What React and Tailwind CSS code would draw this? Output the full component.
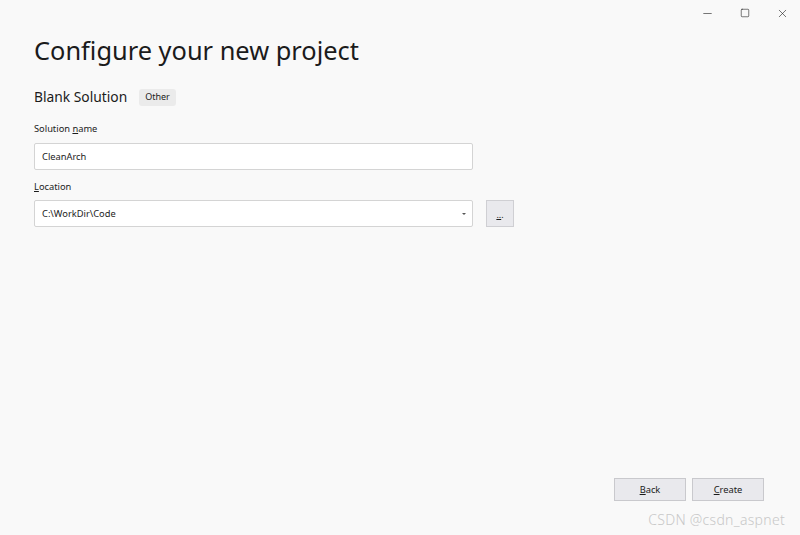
import { Minus, Square, X } from "lucide-react";

const App = () => {
    return (
        <div className="w-[800px] h-[535px] bg-[#f9f9f9] flex flex-col text-[#1b1b1b] font-['Noto_Sans','Open_Sans',sans-serif] overflow-hidden">
            {/* title bar */}
            <div className="flex justify-end h-[26px]">
                <div className="w-[38px] flex items-center justify-center"><Minus size={13} strokeWidth={1.1} /></div>
                <div className="w-[38px] flex items-center justify-center"><Square size={10} strokeWidth={1.4} /></div>
                <div className="w-[36px] flex items-center justify-center"><X size={13} strokeWidth={1.1} /></div>
            </div>

            <div className="flex flex-col flex-1 pl-[34px] pr-[36px]">
                <h1 className="text-[25.4px] leading-[34px] mt-[7px]">Configure your new project</h1>

                <div className="flex items-center gap-[12px] mt-[20px]">
                    <span className="text-[13.8px] leading-[20px]">Blank Solution</span>
                    <span className="bg-[#ebebeb] rounded-[3px] text-[9px] px-[6px] h-[17px] flex items-center">Other</span>
                </div>

                <label className="text-[9.3px] mt-[14px] leading-[16px]">Solution <span className="underline">n</span>ame</label>
                <div className="w-[439px] h-[27px] mt-[6px] bg-white border border-[#d4d4d4] rounded-[2px] flex items-center px-[7px] text-[9.3px]">CleanArch</div>

                <label className="text-[9.3px] mt-[9px] leading-[16px]"><span className="underline">L</span>ocation</label>
                <div className="flex items-center gap-[13px] mt-[5px]">
                    <div className="w-[439px] h-[27px] bg-white border border-[#d4d4d4] rounded-[2px] flex items-center justify-between pl-[7px] pr-[4px] text-[9.3px]">
                        <span>C:\WorkDir\Code</span>
                        <svg width="8" height="6" viewBox="0 0 8 6"><path d="M2 2h4L4 4z" fill="#555" /></svg>
                    </div>
                    <div className="w-[28px] h-[27px] bg-[#e9e9ed] border border-[#cfcfd3] flex items-center justify-center text-[9px] pt-[2px]"><span className="underline">..</span>.</div>
                </div>

                <div className="flex-1" />

                <div className="flex justify-end gap-[6px]">
                    <button className="w-[72px] h-[23px] bg-[#e9e9ed] border border-[#c9c9cd] text-[9.3px]"><span className="underline">B</span>ack</button>
                    <button className="w-[72px] h-[23px] bg-[#e9e9ed] border border-[#c9c9cd] text-[9.3px]"><span className="underline">C</span>reate</button>
                </div>
                <div className="flex justify-end mt-[8px] mb-[5px]">
                    <span className="text-[14px] text-[#c8c8c8] mr-[-21px] font-light tracking-[0.3px]">CSDN @csdn_aspnet</span>
                </div>
            </div>
        </div>
    );
};

export default App;
